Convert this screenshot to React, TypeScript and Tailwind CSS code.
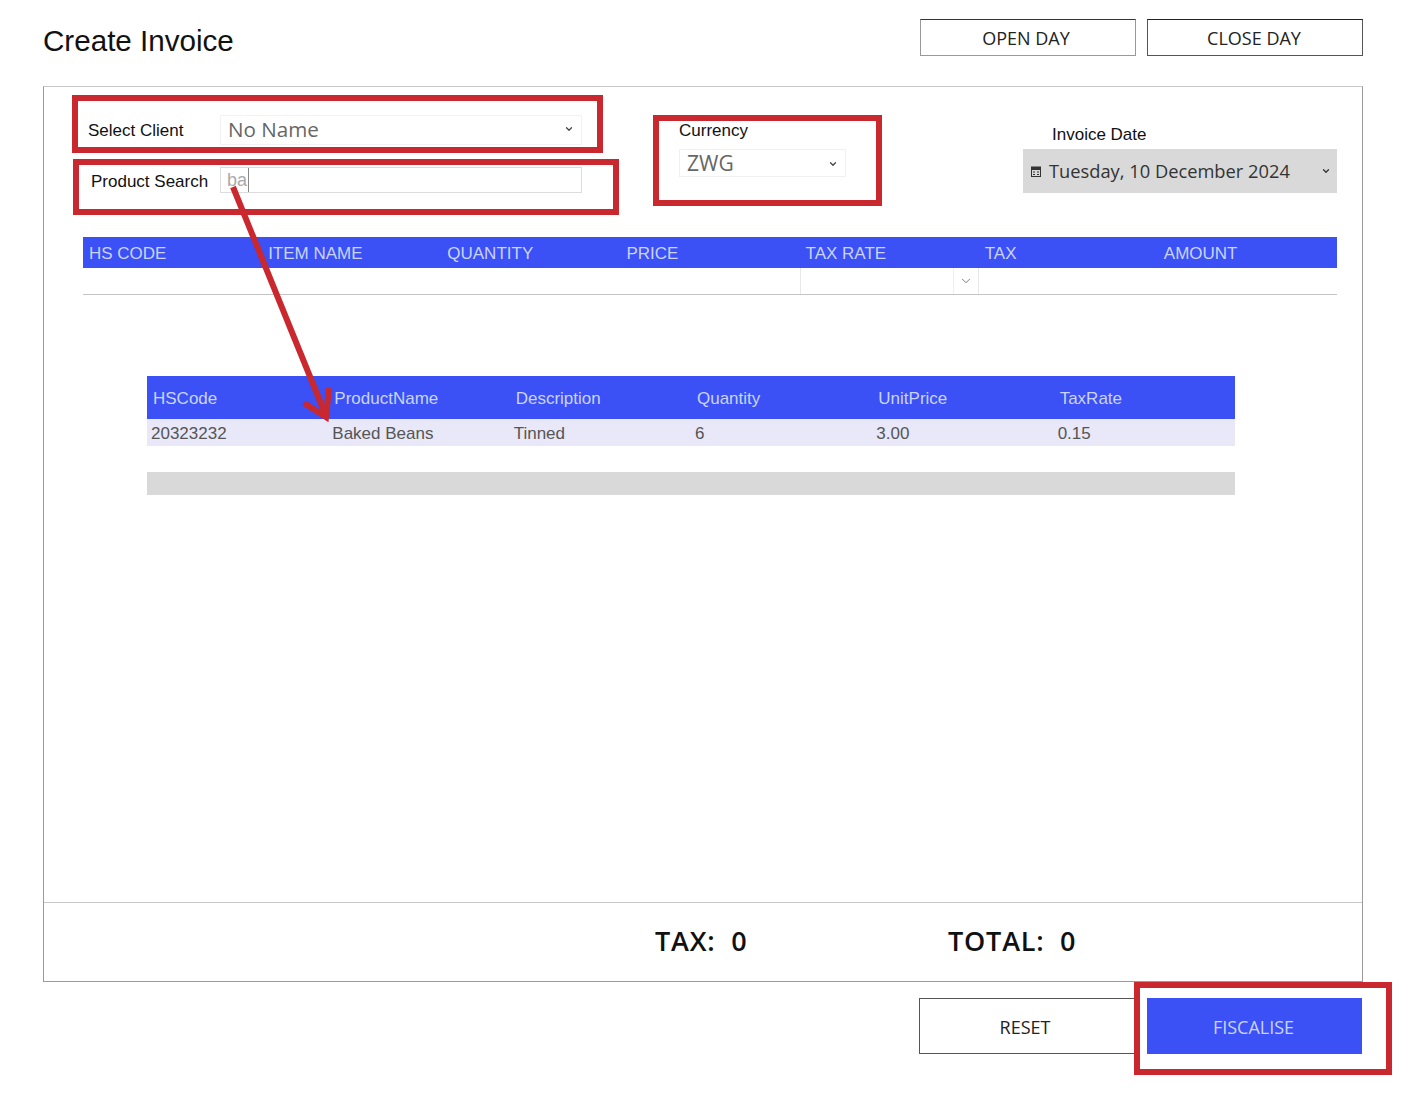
import { ChevronDown } from 'lucide-react'

const invoiceColumns = ['HS CODE', 'ITEM NAME', 'QUANTITY', 'PRICE', 'TAX RATE', 'TAX', 'AMOUNT']
const productColumns = ['HSCode', 'ProductName', 'Description', 'Quantity', 'UnitPrice', 'TaxRate']
const productRow = ['20323232', 'Baked Beans', 'Tinned', '6', '3.00', '0.15']

export default function App() {
  return (
    <div className="relative h-[1108px] w-[1424px] overflow-hidden bg-white pl-[43px] pt-[19px] font-['Liberation_Sans',sans-serif] text-[#111]">
      <div className="w-[1320px]">
        <Header />
        <div className="flex h-[896px] flex-col border border-[#9a9a9a] border-t-[#c8c8c8]">
          <div className="flex-1">
            <InvoiceForm />
            <InvoiceTable />
            <ProductTable />
          </div>
          <Totals />
        </div>
        <div className="mt-[16px] flex justify-end gap-[12px] pr-px font-['Open_Sans',sans-serif] text-[18px]">
          <button className="h-[56px] w-[216px] border border-[#555] bg-white pr-[4px] pt-[2px] text-[#222]">RESET</button>
          <button className="h-[56px] w-[215px] bg-[#3b50f5] pr-[2px] pt-[2px] text-[#c9d4ff]">FISCALISE</button>
        </div>
      </div>
      <Annotations />
    </div>
  )
}

function Header() {
  return (
    <div className="flex h-[67px] items-start justify-between">
      <h1 className="pt-[4px] text-[29.6px] leading-[36px]">Create Invoice</h1>
      <div className="flex gap-[11px] font-['Open_Sans',sans-serif] text-[18px] text-[#222]">
        <button className="h-[37px] w-[216px] border border-[#999] border-t-[#333] pr-[4px] pt-[2px]">OPEN DAY</button>
        <button className="h-[37px] w-[216px] border border-[#555] border-t-[#222] pr-[2px] pt-[2px]">CLOSE DAY</button>
      </div>
    </div>
  )
}

function CalendarGlyph() {
  return (
    <svg width="10" height="11" viewBox="0 0 10 11" className="shrink-0 text-[#333]">
      <rect x="0.5" y="1" width="9" height="9.5" fill="none" stroke="currentColor" />
      <rect x="0.5" y="1" width="9" height="3" fill="currentColor" />
      <path d="M2 6h2M6 6h2M2 8.5h2M6 8.5h2" stroke="currentColor" />
    </svg>
  )
}

function InvoiceForm() {
  return (
    <div className="flex h-[150px] pl-[44px] pt-[28px] text-[17px]">
      <div className="w-[494px]">
        <div className="flex h-[30px] items-center">
          <label className="w-[132px] pt-px">Select Client</label>
          <div className="flex h-full flex-1 items-center justify-between border border-[#f2f2f2] px-[7px] pb-[2px] font-['Open_Sans',sans-serif] text-[20.6px] text-[#666]">
            No Name
            <ChevronDown size={10} strokeWidth={3} className="text-[#444]" />
          </div>
        </div>
        <div className="mt-[22px] flex h-[26px] items-center">
          <label className="w-[132px] pl-[3px] pt-[3px]">Product Search</label>
          <div className="flex h-full flex-1 items-center border border-[#dcdcdc] pl-[6px] text-[18px] text-[#aaa]">
            <span className="border-r border-[#888] pr-px leading-[24px]">ba</span>
          </div>
        </div>
      </div>
      <div className="ml-[97px] w-[167px]">
        <div className="h-[34px] pt-px leading-[30px]">Currency</div>
        <div className="flex h-[28px] items-center justify-between border border-[#f0f0f0] pl-[7px] pr-[7px] pt-px font-['Open_Sans',sans-serif] text-[21px] text-[#666]">
          ZWG
          <ChevronDown size={10} strokeWidth={3} className="text-[#444]" />
        </div>
      </div>
      <div className="ml-[177px] w-[314px]">
        <div className="h-[34px] pl-[29px] pt-[10px] leading-[20px]">Invoice Date</div>
        <div className="flex h-[44px] items-center bg-[#d9d9d9] pl-[8px] pr-[6px] font-['Open_Sans',sans-serif] text-[18.3px] text-[#333]">
          <CalendarGlyph />
          <span className="ml-[8px] flex-1">Tuesday, 10 December 2024</span>
          <ChevronDown size={10} strokeWidth={3} />
        </div>
      </div>
    </div>
  )
}

function InvoiceTable() {
  return (
    <div className="ml-[39px] w-[1254px]">
      <div className="grid h-[31px] grid-cols-7 items-center bg-[#3b50f5] pt-[2px] text-[17px] text-[#c9d4ff]">
        {invoiceColumns.map((col) => (
          <div key={col} className="pl-[6px]">
            {col}
          </div>
        ))}
      </div>
      <div className="grid h-[27px] grid-cols-7 border-b border-[#c4c4c4]">
        <div className="col-start-5 flex justify-end border-x border-[#e8e8e8]">
          <div className="flex w-[25px] items-center justify-center border-l border-[#efefef] text-[#666]">
            <ChevronDown size={14} strokeWidth={1.5} />
          </div>
        </div>
      </div>
    </div>
  )
}

function ProductTable() {
  return (
    <div className="ml-[103px] mt-[81px] w-[1088px] text-[17px]">
      <div className="grid h-[43px] grid-cols-6 items-center bg-[#3b50f5] pt-[2px] text-[#c9d4ff]">
        {productColumns.map((col) => (
          <div key={col} className="pl-[6px]">
            {col}
          </div>
        ))}
      </div>
      <div className="grid h-[27px] grid-cols-6 items-center bg-[#e8e8f8] pt-[2px] text-[#555]">
        {productRow.map((cell) => (
          <div key={cell} className="pl-[4px]">
            {cell}
          </div>
        ))}
      </div>
      <div className="mt-[26px] h-[23px] bg-[#d9d9d9]" />
    </div>
  )
}

function Totals() {
  return (
    <div className="flex h-[79px] items-center border-t border-[#c8c8c8] pb-[2px] pl-[611px] font-['Open_Sans',sans-serif] text-[27px] font-semibold tracking-[0.8px] text-[#111]">
      <div className="w-[293px] whitespace-pre">TAX:  0</div>
      <div className="whitespace-pre">TOTAL:  0</div>
    </div>
  )
}

// red markup drawn on top of the screenshot
function Annotations() {
  return (
    <>
      <div className="absolute left-[72px] top-[95px] h-[58px] w-[531px] border-[6px] border-[#c8282e]" />
      <div className="absolute left-[73px] top-[159px] h-[56px] w-[546px] border-[6px] border-[#c8282e]" />
      <div className="absolute left-[653px] top-[115px] h-[91px] w-[229px] border-[6px] border-[#c8282e]" />
      <div className="absolute left-[1134px] top-[982px] h-[93px] w-[258px] border-[6px] border-[#c8282e]" />
      <svg className="absolute left-0 top-0" width="1424" height="1108" fill="none">
        <path d="M233 187 L326 416" stroke="#c8282e" strokeWidth="6" />
        <path d="M304 403 L326 417 L329 388" stroke="#c8282e" strokeWidth="6" />
      </svg>
    </>
  )
}
